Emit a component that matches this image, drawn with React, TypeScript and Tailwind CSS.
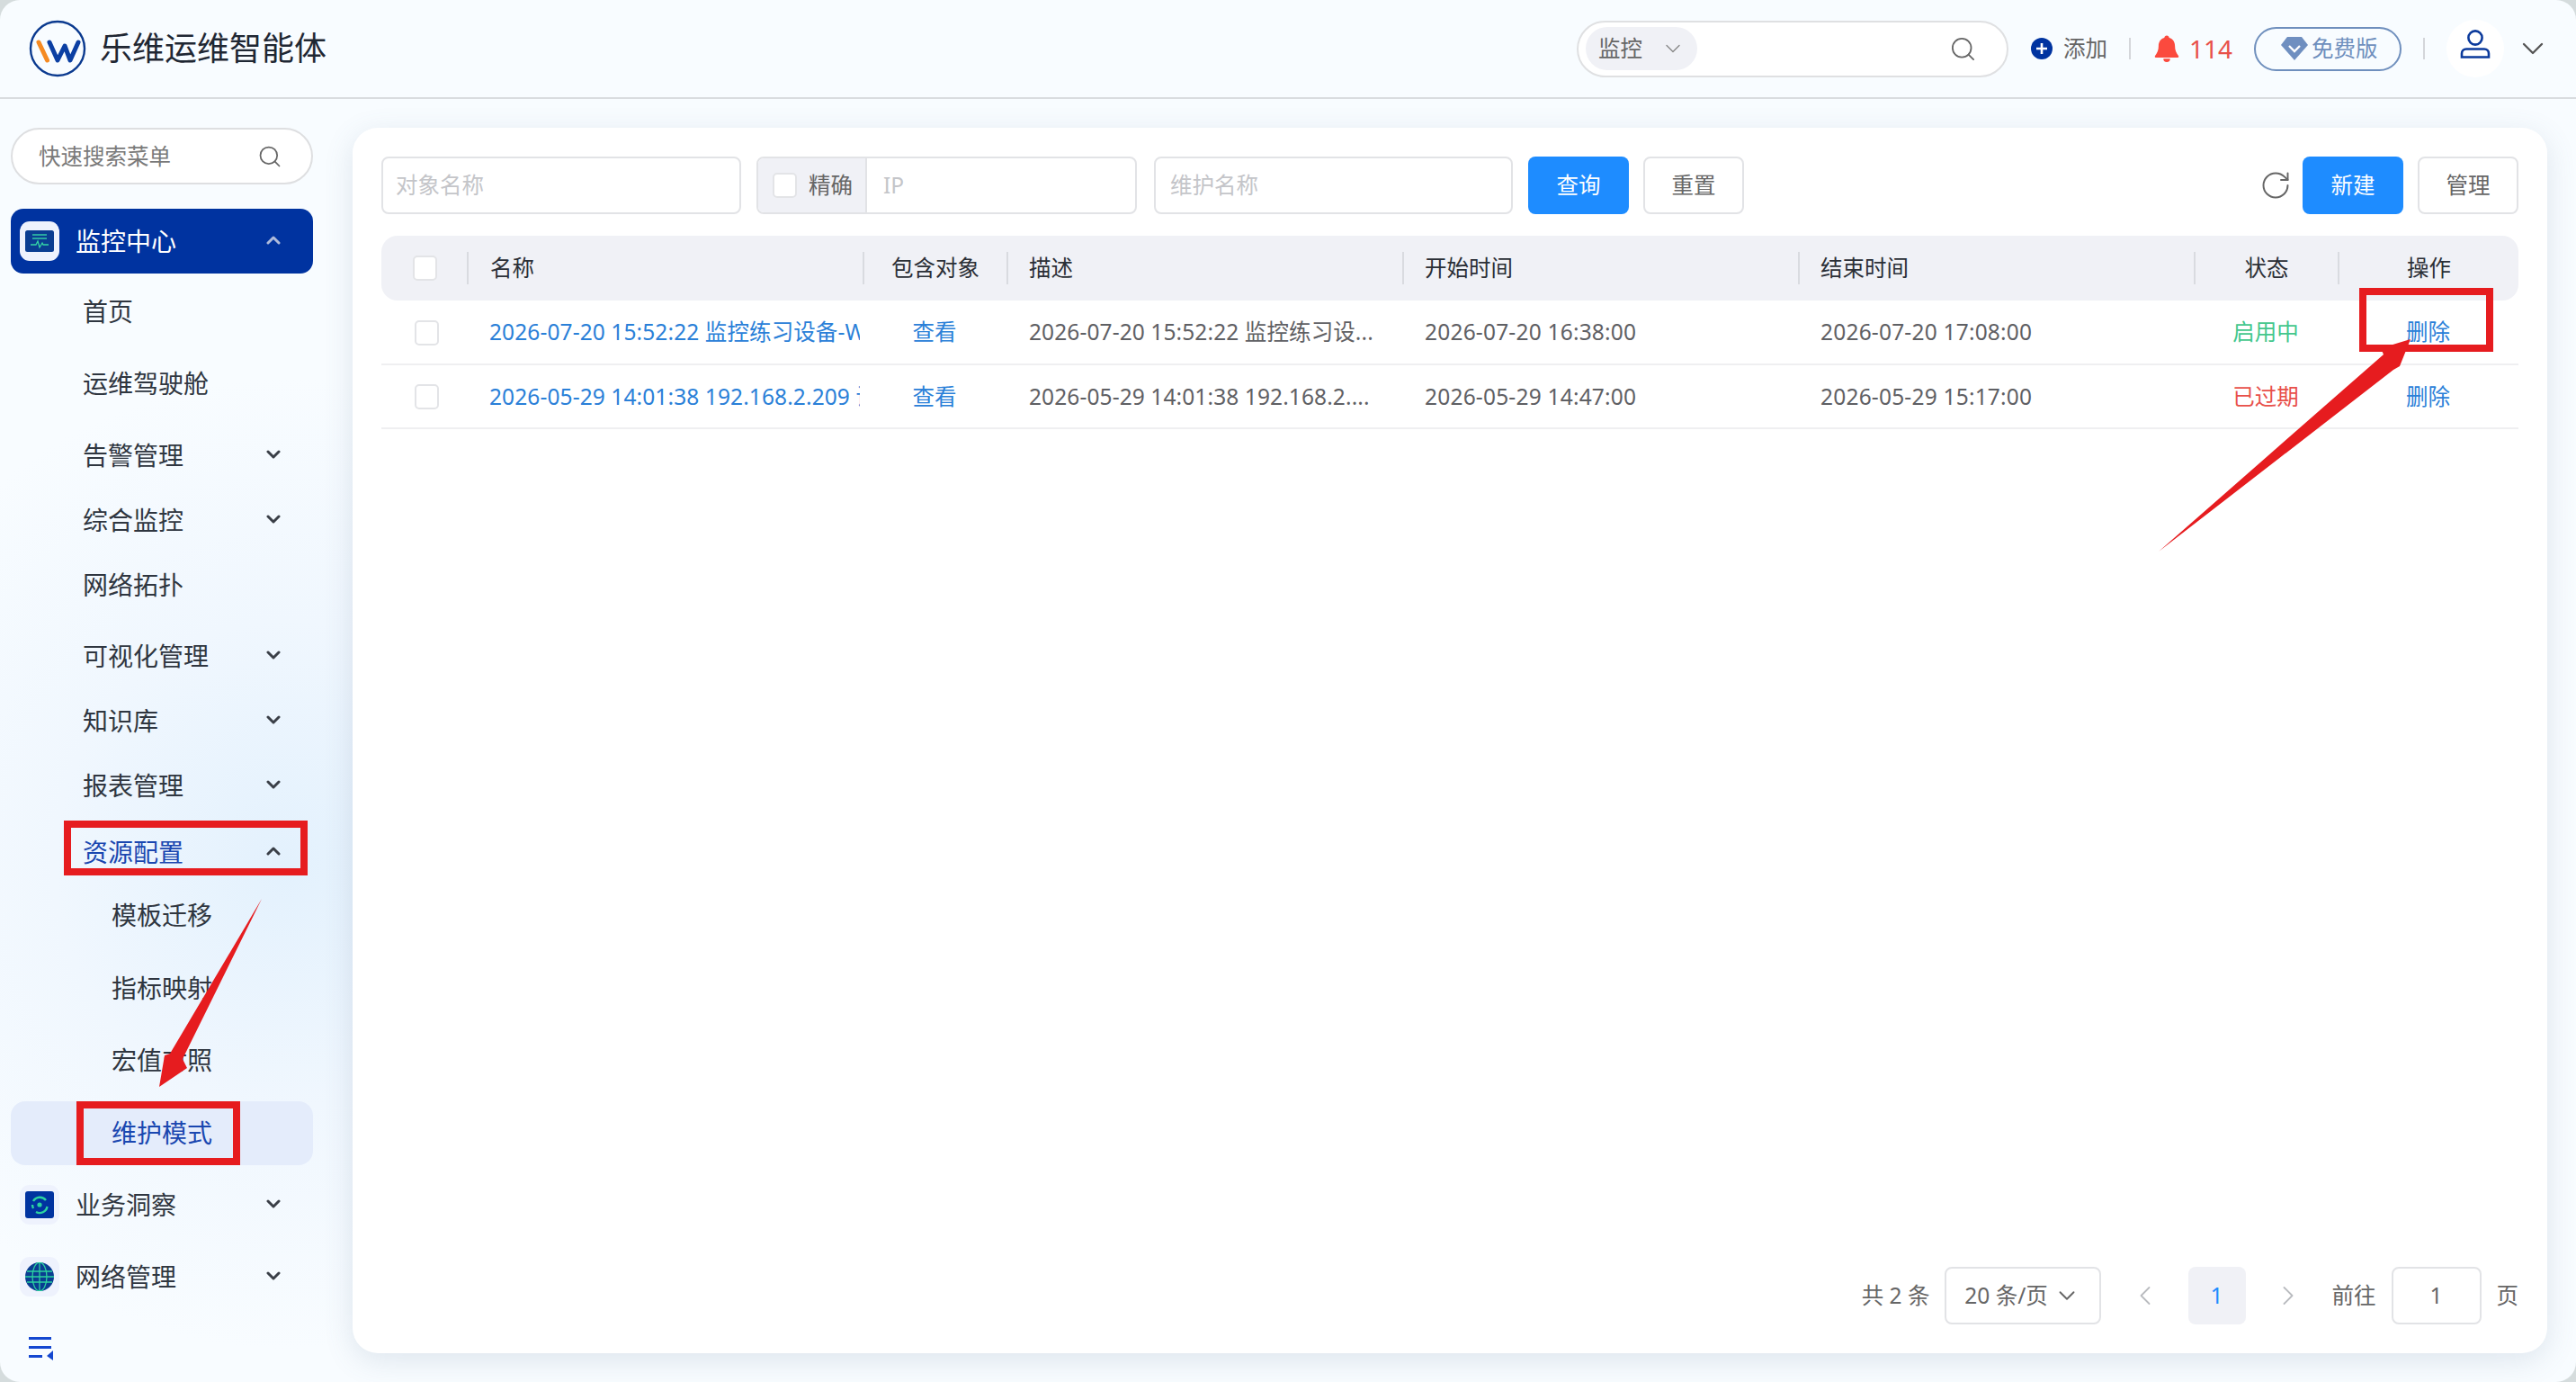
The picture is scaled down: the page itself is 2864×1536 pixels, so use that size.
import React from 'react';
import { ChevronDown, ChevronLeft, ChevronRight, RotateCw, Search } from 'lucide-react';

// Sidebar entries. Pitch in the menu is uneven, so each entry carries its own offset.
const menuItems = [
  { label: '首页', cls: 'h-[72px] mt-[6px]', arrow: '' },
  { label: '运维驾驶舱', cls: 'h-[72px] mt-2', arrow: '' },
  { label: '告警管理', cls: 'h-[72px] mt-2', arrow: 'down' },
  { label: '综合监控', cls: 'h-[72px]', arrow: 'down' },
  { label: '网络拓扑', cls: 'h-[72px]', arrow: '' },
  { label: '可视化管理', cls: 'h-[72px] mt-[7px]', arrow: 'down' },
  { label: '知识库', cls: 'h-[72px]', arrow: 'down' },
  { label: '报表管理', cls: 'h-[72px]', arrow: 'down' },
];

const subItems = [
  { label: '模板迁移', cls: 'h-[72px] -mt-[2px]' },
  { label: '指标映射', cls: 'h-[72px] mt-[9px]' },
  { label: '宏值对照', cls: 'h-[72px] mt-2' },
];

const rows = [
  {
    name: '2026-07-20 15:52:22 监控练习设备-Windows 维护',
    desc: '2026-07-20 15:52:22 监控练习设...',
    start: '2026-07-20 16:38:00',
    end: '2026-07-20 17:08:00',
    status: '启用中',
    statusCls: 'text-[#43c78d]',
  },
  {
    name: '2026-05-29 14:01:38 192.168.2.209 设备维护',
    desc: '2026-05-29 14:01:38 192.168.2....',
    start: '2026-05-29 14:47:00',
    end: '2026-05-29 15:17:00',
    status: '已过期',
    statusCls: 'text-[#e8504a]',
  },
];

const gridCols = 'grid grid-cols-[95px_440px_160px_440px_440px_440px_160px_201px]';

const NavChevron = ({ up, white }: { up?: boolean; white?: boolean }) => (
  <svg width="16" height="10" viewBox="0 0 16 10" className="shrink-0 mb-[2px]">
    <polyline
      points={up ? '2,8 8,2 14,8' : '2,2 8,8 14,2'}
      fill="none"
      stroke={white ? '#aebbdb' : '#3a3f47'}
      strokeWidth="3"
      strokeLinecap="round"
      strokeLinejoin="round"
    />
  </svg>
);

const Checkbox = ({ className }: { className: string }) => (
  <span className={`block w-[27px] h-[28px] rounded-[5px] border-2 border-[#e3e4e7] bg-white ${className}`} />
);

const Logo = () => (
  <svg width="64" height="64" viewBox="0 0 64 64" className="shrink-0">
    <circle cx="32" cy="32" r="30" fill="none" stroke="#0b3a8f" strokeWidth="2.4" />
    <line x1="11" y1="25" x2="20.5" y2="45" stroke="#f58a22" strokeWidth="5" strokeLinecap="round" />
    <polyline
      points="23,25 32,45 40,29 46,45 55,25"
      fill="none"
      stroke="#0b3fa3"
      strokeWidth="5"
      strokeLinecap="round"
      strokeLinejoin="round"
    />
  </svg>
);

const MonitorIcon = () => (
  <svg width="32" height="24" viewBox="0 0 32 24">
    <rect width="32" height="24" rx="2.5" fill="#0a3d91" />
    <line x1="8" y1="5" x2="24" y2="5" stroke="#35d6a6" strokeWidth="1.4" />
    <line x1="8" y1="9" x2="24" y2="9" stroke="#35d6a6" strokeWidth="1.4" />
    <polyline points="6,16 12,16 14,12 16,19 19,14 20,16 26,16" fill="none" stroke="#35d6a6" strokeWidth="1.3" />
  </svg>
);

const InsightIcon = () => (
  <svg width="32" height="30" viewBox="0 0 32 30">
    <rect width="32" height="30" rx="3" fill="#0033a0" />
    <path d="M9 11 A8.5 8.5 0 0 1 23 10" fill="none" stroke="#2bd3a0" strokeWidth="2.4" />
    <path d="M24.5 17 A8.5 8.5 0 0 1 12 23" fill="none" stroke="#2bd3a0" strokeWidth="2.4" />
    <path d="M8 15 A8.5 8.5 0 0 0 9 19" fill="none" stroke="#2bd3a0" strokeWidth="2.4" />
    <circle cx="16" cy="15" r="2.6" fill="#2bd3a0" />
  </svg>
);

const GlobeIcon = () => (
  <svg width="32" height="32" viewBox="0 0 32 32">
    <circle cx="16" cy="16" r="16" fill="#0a3d91" />
    <g fill="none" stroke="#2bd3a0" strokeWidth="1.3">
      <line x1="2" y1="10" x2="30" y2="10" />
      <line x1="0" y1="16" x2="32" y2="16" />
      <line x1="2" y1="22" x2="30" y2="22" />
      <line x1="16" y1="0" x2="16" y2="32" />
      <ellipse cx="16" cy="16" rx="8" ry="16" />
    </g>
  </svg>
);

const CollapseIcon = () => (
  <svg width="28" height="26" viewBox="0 0 28 26">
    <g fill="#1447d0">
      <rect x="0" y="0" width="25" height="3" />
      <rect x="0" y="10" width="25" height="3" />
      <rect x="0" y="20" width="15" height="3" />
      <polygon points="20,21 27,15 27,26" />
    </g>
  </svg>
);

const BellIcon = () => (
  <svg width="30" height="30" viewBox="0 0 28 28">
    <path
      d="M14 0.5c1.4 0 2.4 1 2.5 2.2 4 1.1 6 4.4 6 8.6 0 4.4 1.2 7.2 3.6 10.2 0.6 0.8 0.3 1.8-0.8 1.8H2.7c-1.1 0-1.4-1-0.8-1.8 2.4-3 3.6-5.8 3.6-10.2 0-4.2 2-7.5 6-8.6 0.1-1.2 1.1-2.2 2.5-2.2z"
      fill="#fb4a3e"
    />
    <path d="M10.5 24.5h7a3.5 3.5 0 0 1-7 0z" fill="#fb4a3e" />
  </svg>
);

const DiamondIcon = () => (
  <svg width="30" height="26" viewBox="0 0 30 26" className="shrink-0">
    <polygon points="7,0 23,0 30,9 15,26 0,9" fill="#6f8fc0" />
    <polyline points="9,10 15,16 21,10" fill="none" stroke="#ffffff" strokeWidth="2.4" />
  </svg>
);

const PersonIcon = () => (
  <svg width="34" height="32" viewBox="0 0 34 32" fill="none" stroke="#0b3a9c" strokeWidth="2.6" className="mb-[10px]">
    <circle cx="17" cy="9" r="7.6" />
    <path d="M2 30.5v-4c0-3 2-5 5-5h20c3 0 5 2 5 5v4z" />
  </svg>
);

// The hand-drawn red marks that sit on top of the screenshot
const Annotations = () => (
  <svg width="2864" height="1536" viewBox="0 0 2864 1536" className="absolute inset-0 pointer-events-none">
    <g fill="none" stroke="#e61c1f" strokeWidth="8">
      <rect x="75" y="916" width="263" height="53" />
      <rect x="89" y="1228" width="174" height="63" />
      <rect x="2627" y="324" width="141" height="63" />
    </g>
    <polygon points="291,999 203,1177 208,1187 177,1208 183,1173 189,1171" fill="#e61c1f" />
    <polygon points="2400,613 2661,411 2668,407 2680,377 2647,387 2650,394" fill="#e61c1f" />
  </svg>
);

export default function App() {
  return (
    <div className="relative w-[2864px] h-[1536px] overflow-hidden bg-[#d5dcdd] font-['Noto_Sans','Noto_Sans_CJK_SC',sans-serif]">
      <div className="w-full h-full rounded-[22px] overflow-hidden flex flex-col bg-[#f8fcff] bg-[radial-gradient(ellipse_520px_540px_at_320px_960px,#e3f1fd_0%,#f0f7fe_50%,#f8fcff_100%)]">
        {/* Header */}
        <header className="h-[110px] shrink-0 border-b-2 border-[#d9dcdf] flex items-center pl-[32px]">
          <Logo />
          <h1 className="ml-[15px] text-[36px] leading-none font-normal text-[#1f2733]">乐维运维智能体</h1>
          <div className="ml-auto flex items-center">
            <div className="w-[480px] h-[63px] rounded-full border-2 border-[#dfe0e2] bg-white flex items-center pl-2 pr-[33px]">
              <div className="w-[124px] h-[48px] rounded-full bg-[#f0f1f6] flex items-center pl-[14px]">
                <span className="text-[24.5px] text-[#666]">监控</span>
                <ChevronDown size={28} strokeWidth={1.2} className="ml-[20px] text-[#888]" />
              </div>
              <Search size={31} strokeWidth={1.4} className="ml-auto text-[#666]" />
            </div>
            <svg width="24" height="24" viewBox="0 0 24 24" className="ml-[25px]">
              <circle cx="12" cy="12" r="12" fill="#0033a0" />
              <path d="M12 6v12M6 12h12" stroke="#fff" strokeWidth="2.6" />
            </svg>
            <span className="ml-3 text-[24.5px] text-[#666]">添加</span>
            <span className="ml-[24px] w-[2px] h-6 bg-[#d4d6da]" />
            <span className="ml-[25px] flex">
              <BellIcon />
            </span>
            <span className="ml-[10px] text-[28px] leading-none text-[#e8504a]">114</span>
            <div className="ml-6 w-[164px] h-[49px] rounded-full border-[2.5px] border-[#6f8fbd] flex items-center pl-[28px] gap-[4px]">
              <DiamondIcon />
              <span className="text-[24.5px] text-[#6f8fbd] whitespace-nowrap">免费版</span>
            </div>
            <span className="ml-[24px] w-[2px] h-6 bg-[#d4d6da]" />
            <div className="ml-[24px] w-[64px] h-[64px] rounded-full bg-white flex items-center justify-center">
              <PersonIcon />
            </div>
            <ChevronDown size={40} strokeWidth={1.4} className="ml-3 mr-[28px] text-[#555]" />
          </div>
        </header>

        <div className="flex-1 flex min-h-0">
          {/* Sidebar */}
          <aside className="w-[392px] shrink-0 pt-8 pl-3">
            <div className="w-[336px]">
              <div className="h-[63px] rounded-full border-2 border-[#dedfe1] bg-white flex items-center pl-[29px] pr-[32px]">
                <span className="text-[24.5px] text-[#7a7a7a] pt-[2px]">快速搜索菜单</span>
                <Search size={28} strokeWidth={1.5} className="ml-auto text-[#666]" />
              </div>

              <div className="mt-[27px] h-[72px] rounded-[14px] bg-[#0033a0] flex items-center pl-[10px] pr-[36px]">
                <span className="w-[44px] h-[44px] rounded-[11px] bg-[#eef2fd] flex items-center justify-center">
                  <MonitorIcon />
                </span>
                <span className="ml-[18px] text-[28px] leading-none text-white">监控中心</span>
                <span className="ml-auto flex">
                  <NavChevron up white />
                </span>
              </div>

              {menuItems.map((item) => (
                <div key={item.label} className={`${item.cls} flex items-center pl-[80px] pr-[36px]`}>
                  <span className="text-[28px] leading-none text-[#2f3640]">{item.label}</span>
                  {item.arrow && (
                    <span className="ml-auto flex">
                      <NavChevron />
                    </span>
                  )}
                </div>
              ))}

              <div className="mt-[2px] h-[72px] flex items-center pl-[80px] pr-[36px]">
                <span className="text-[28px] leading-none text-[#1a47b0]">资源配置</span>
                <span className="ml-auto flex">
                  <NavChevron up />
                </span>
              </div>

              {subItems.map((item) => (
                <div key={item.label} className={`${item.cls} flex items-center pl-[112px]`}>
                  <span className="text-[28px] leading-none text-[#2f3640]">{item.label}</span>
                </div>
              ))}

              <div className="mt-[10px] h-[71px] rounded-[16px] bg-[#e4ecfb] flex items-center pl-[112px] pb-[2px]">
                <span className="text-[28px] leading-none text-[#1a47b0]">维护模式</span>
              </div>

              <div className="mt-2 h-[72px] flex items-center pl-[10px] pr-[36px]">
                <span className="w-[44px] h-[44px] rounded-[11px] bg-[#eef2fd] flex items-center justify-center">
                  <InsightIcon />
                </span>
                <span className="ml-[18px] text-[28px] leading-none text-[#2f3640]">业务洞察</span>
                <span className="ml-auto flex">
                  <NavChevron />
                </span>
              </div>

              <div className="mt-2 h-[72px] flex items-center pl-[10px] pr-[36px]">
                <span className="w-[44px] h-[44px] rounded-[11px] bg-[#eef2fd] flex items-center justify-center">
                  <GlobeIcon />
                </span>
                <span className="ml-[18px] text-[28px] leading-none text-[#2f3640]">网络管理</span>
                <span className="ml-auto flex">
                  <NavChevron />
                </span>
              </div>

              <div className="mt-[31px] pl-5 flex">
                <CollapseIcon />
              </div>
            </div>
          </aside>

          {/* Main card */}
          <main className="w-[2440px] my-8 rounded-[28px] bg-white shadow-[0_8px_32px_rgba(90,110,140,0.16)] flex flex-col px-8">
            <div className="mt-8 h-16 flex items-stretch shrink-0 text-[24.5px]">
              <div className="w-[400px] rounded-[8px] border-2 border-[#e2e3e6] flex items-center pl-[14px] text-[#c4c5c9]">对象名称</div>
              <div className="ml-[17px] w-[423px] rounded-[8px] border-2 border-[#e2e3e6] flex overflow-hidden">
                <div className="w-[121px] bg-[#f0f1f6] border-r-2 border-[#e2e3e6] flex items-center pl-[16px]">
                  <Checkbox className="shrink-0" />
                  <span className="ml-[13px] text-[#666] whitespace-nowrap">精确</span>
                </div>
                <div className="flex items-center pl-[18px] text-[#c4c5c9]">IP</div>
              </div>
              <div className="ml-[19px] w-[399px] rounded-[8px] border-2 border-[#e2e3e6] flex items-center pl-[16px] text-[#c4c5c9]">维护名称</div>
              <button className="ml-[17px] w-[112px] rounded-[8px] bg-[#1e8cff] text-white">查询</button>
              <button className="ml-4 w-[112px] rounded-[8px] border-2 border-[#e2e3e6] text-[#666]">重置</button>
              <span className="ml-auto self-center flex">
                <RotateCw size={36} strokeWidth={1.3} className="text-[#666]" />
              </span>
              <button className="ml-3 w-[112px] rounded-[8px] bg-[#1e8cff] text-white">新建</button>
              <button className="ml-4 w-[112px] rounded-[8px] border-2 border-[#e2e3e6] text-[#666]">管理</button>
            </div>

            <div className="mt-6 shrink-0 text-[24.5px]">
              <div className={`${gridCols} h-[72px] items-center rounded-[18px] bg-[#f0f1f6] text-[#2b2f36]`}>
                <div className="pl-[35px]">
                  <Checkbox className="" />
                </div>
                <div className="h-9 border-l-2 border-[#d9dbe0] pl-[24px] flex items-center">名称</div>
                <div className="h-9 border-l-2 border-[#d9dbe0] flex items-center justify-center">包含对象</div>
                <div className="h-9 border-l-2 border-[#d9dbe0] pl-[23px] flex items-center">描述</div>
                <div className="h-9 border-l-2 border-[#d9dbe0] pl-[23px] flex items-center">开始时间</div>
                <div className="h-9 border-l-2 border-[#d9dbe0] pl-[23px] flex items-center">结束时间</div>
                <div className="h-9 border-l-2 border-[#d9dbe0] flex items-center justify-center">状态</div>
                <div className="h-9 border-l-2 border-[#d9dbe0] flex items-center justify-center">操作</div>
              </div>
              {rows.map((row) => (
                <div key={row.start} className={`${gridCols} h-[71.5px] pt-[2px] items-center border-b-2 border-[#efeff1] text-[#5f6064]`}>
                  <div className="pl-[37px]">
                    <Checkbox className="" />
                  </div>
                  <div className="pl-[25px] pr-[3px]">
                    <div className="overflow-hidden whitespace-nowrap tracking-[0.1px] text-[#2a80d8]">{row.name}</div>
                  </div>
                  <div className="text-center text-[#2a80d8]">查看</div>
                  <div className="pl-[25px] whitespace-nowrap tracking-[0.1px]">{row.desc}</div>
                  <div className="pl-[25px] whitespace-nowrap tracking-[0.2px]">{row.start}</div>
                  <div className="pl-[25px] whitespace-nowrap tracking-[0.2px]">{row.end}</div>
                  <div className={`text-center ${row.statusCls}`}>{row.status}</div>
                  <div className="text-center text-[#2a80d8]">删除</div>
                </div>
              ))}
            </div>

            {/* Pagination */}
            <div className="mt-auto mb-8 h-16 flex items-center justify-end text-[24.5px] text-[#666] shrink-0">
              <span className="whitespace-nowrap">共 2 条</span>
              <div className="ml-4 w-[174px] h-16 rounded-[8px] border-2 border-[#e2e3e6] flex items-center justify-center gap-[6px] whitespace-nowrap">
                20 条/页
                <ChevronDown size={30} strokeWidth={1.5} />
              </div>
              <ChevronLeft size={36} strokeWidth={1.2} className="ml-[31px] text-[#b9bbbf]" />
              <div className="ml-[30px] w-16 h-16 rounded-[8px] bg-[#f0f1f6] flex items-center justify-center text-[#1e8cff]">1</div>
              <ChevronRight size={36} strokeWidth={1.2} className="ml-[29px] text-[#b9bbbf]" />
              <span className="ml-[31px] whitespace-nowrap">前往</span>
              <div className="ml-[17px] w-[100px] h-16 rounded-[8px] border-2 border-[#e2e3e6] flex items-center justify-center">1</div>
              <span className="ml-[17px]">页</span>
            </div>
          </main>
        </div>
      </div>
      <Annotations />
    </div>
  );
}
